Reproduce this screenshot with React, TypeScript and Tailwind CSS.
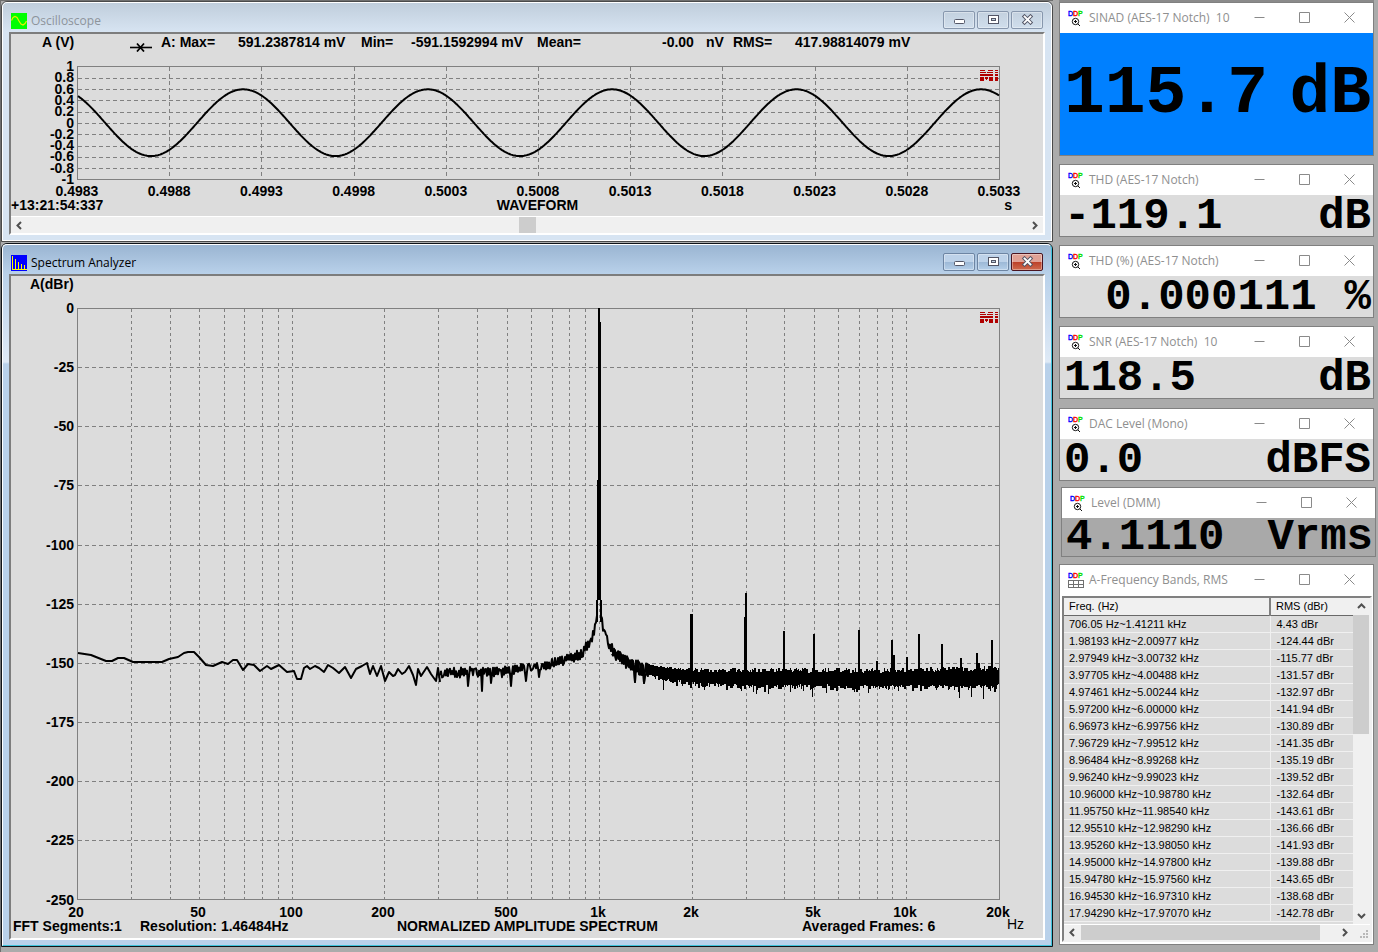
import React from 'react';

const GRID = '#808080';

function seeded(seed: number) {
  let s = seed;
  return () => {
    s = (s * 1664525 + 1013904223) % 4294967296;
    return s / 4294967296;
  };
}

/* ---------- drawings ---------- */

function MiLogo({ x, y }: { x: number; y: number }) {
  return (
    <g transform={`translate(${x} ${y})`} shapeRendering="crispEdges">
      <rect x="0" y="0" width="18" height="11" fill="#dcdcdc" />
      <g fill="#b00000">
        <rect x="0" y="0" width="5" height="1" />
        <rect x="8" y="0" width="5" height="1" />
        <rect x="15" y="0" width="3" height="1" />
        <rect x="0" y="2" width="6" height="1" />
        <rect x="7" y="2" width="6" height="1" />
        <rect x="15" y="2" width="3" height="1" />
        <rect x="0" y="4" width="13" height="2" />
        <rect x="15" y="4" width="3" height="2" />
        <rect x="0" y="7" width="4" height="4" />
        <rect x="5" y="7" width="3" height="2" />
        <rect x="6" y="9" width="1" height="1" />
        <rect x="9" y="7" width="4" height="4" />
        <rect x="15" y="7" width="3" height="4" />
      </g>
    </g>
  );
}

function sinePath() {
  let d = '';
  for (let x = 78; x <= 999; x += 1) {
    const y = 122.7 - 33.4 * Math.cos((2 * Math.PI * (x - 243.3)) / 184.4);
    d += `${x === 78 ? 'M' : 'L'}${x} ${y.toFixed(1)}`;
  }
  return d;
}

function WaveformChart() {
  const ys = ['1', '0.8', '0.6', '0.4', '0.2', '0', '-0.2', '-0.4', '-0.6', '-0.8', '-1'];
  const xs = ['0.4983', '0.4988', '0.4993', '0.4998', '0.5003', '0.5008', '0.5013', '0.5018', '0.5023', '0.5028', '0.5033'];
  return (
    <svg viewBox="11 58 1032 143" className="block h-auto w-full font-['Liberation_Sans',sans-serif] text-[14px] font-bold" role="img" aria-label="Waveform">
      <g stroke={GRID} strokeDasharray="4 3" shapeRendering="crispEdges">
        {ys.slice(1, -1).map((v, i) => (
          <line key={v} x1="78" x2="999" y1={Math.round(66.5 + 11.3 * (i + 1)) + 0.5} y2={Math.round(66.5 + 11.3 * (i + 1)) + 0.5} />
        ))}
        {xs.slice(1, -1).map((v, i) => (
          <line key={v} y1="67" y2="179" x1={Math.round(77 + 92.2 * (i + 1)) + 0.5} x2={Math.round(77 + 92.2 * (i + 1)) + 0.5} />
        ))}
      </g>
      <rect x="77.5" y="66.5" width="922" height="113" fill="none" stroke={GRID} shapeRendering="crispEdges" />
      <MiLogo x={980} y={70} />
      <path d={sinePath()} fill="none" stroke="#000" strokeWidth="2" />
      {ys.map((v, i) => (
        <text key={v} x="74" y={71 + 11.3 * i} textAnchor="end">{v}</text>
      ))}
      {xs.map((v, i) => (
        <text key={v} x={77 + 92.2 * i} y="196" textAnchor="middle">{v}</text>
      ))}
    </svg>
  );
}

const LOW_BAND: [number, number][] = [
  [78, 653], [91, 655], [101, 659], [106, 661], [112, 661], [118, 658], [124, 658], [133, 662], [140, 662], [162, 662],
  [169, 659], [178, 657], [184, 653], [188, 652], [194, 652], [199, 657], [206, 665], [213, 666], [222, 662], [228, 664],
  [233, 660], [237, 660], [243, 670], [248, 664], [254, 665], [260, 671], [267, 666], [271, 669], [279, 665], [287, 672],
  [294, 671], [297, 679], [301, 679], [304, 668], [307, 666], [310, 669], [315, 666], [319, 668], [324, 672], [328, 665],
  [333, 668], [339, 673], [345, 667], [351, 678], [356, 669], [362, 666], [367, 663], [370, 674], [373, 666], [377, 676],
  [381, 666], [385, 681], [389, 672], [393, 676], [395, 675], [398, 669], [402, 674], [405, 672], [409, 666], [413, 675],
  [416, 685], [418, 669], [421, 676], [427, 667], [431, 674], [436, 681], [438, 668], [440, 682],
];

/* centre, upward reach and downward reach of the trace along the log axis */
const FLOOR: [number, number, number, number][] = [
  [440, 673, 5, 5], [500, 672, 6, 6], [520, 669, 5, 5], [545, 665, 4, 5], [560, 661, 5, 5], [580, 654, 5, 6], [590, 643, 5, 6],
  [594, 632, 4, 5], [597, 614, 3, 5], [601, 614, 3, 4], [604, 633, 4, 5], [610, 646, 5, 6], [617, 656, 6, 6], [630, 663, 6, 8],
  [645, 669, 6, 8], [665, 674, 7, 8], [700, 677, 9, 10], [760, 678, 10, 11], [860, 679, 11, 10], [940, 679, 12, 10], [999, 678, 13, 10],
];

function floorAt(x: number) {
  let i = 0;
  while (i < FLOOR.length - 2 && x > FLOOR[i + 1][0]) i += 1;
  const a = FLOOR[i];
  const b = FLOOR[i + 1];
  const t = (x - a[0]) / (b[0] - a[0]);
  return [1, 2, 3].map((k) => a[k] + (b[k] - a[k]) * t);
}

const DIPS: Record<number, number> = {
  468: 686, 482: 691, 491: 683, 511: 686, 526: 681, 539: 677, 635: 682, 644: 683,
};

const DEEP: Record<number, number> = {
  663: 690, 704: 690, 756: 694, 768: 694, 812: 697, 959: 698, 971: 697, 983: 699,
};

function skirtPath(from: number, to: number, seed: number) {
  const rnd = seeded(seed);
  let d = '';
  let flip = 1;
  for (let x = from; x <= to; x += 1) {
    const [c, up, down] = floorAt(x);
    flip = rnd() > 0.25 ? -flip : flip;
    const reach = 0.25 + 0.75 * rnd();
    const y = DIPS[x] ?? c + (flip > 0 ? down * reach : -up * reach);
    d += `${x === from ? 'M' : 'L'}${x} ${y.toFixed(1)}`;
  }
  return d;
}

function bandPath() {
  const rnd = seeded(77);
  let d = '';
  let top = 0;
  let bottom = 0;
  for (let x = 646; x <= 998; x += 1) {
    const [c, up, down] = floorAt(x);
    if (x % 2 === 0 || rnd() > 0.6) {
      top = c - up * (0.55 + 0.45 * rnd());
      bottom = c + down * (0.55 + 0.45 * rnd()) + (rnd() > 0.85 ? 4 : 0);
    }
    d += `M${x + 0.5} ${top.toFixed(0)}V${DEEP[x] ?? bottom.toFixed(0)}`;
  }
  return d;
}

const HARMONICS: [number, number, number][] = [
  [691, 614, 3], [746, 593, 2], [745, 617, 3], [784, 631, 2], [814, 634, 2], [859, 630, 2], [877, 661, 2], [892, 640, 2], [893, 655, 3],
  [907, 657, 2], [919, 634, 2], [942, 644, 2], [961, 658, 2], [977, 653, 2], [978, 663, 3], [992, 640, 2],
];

function SpectrumChart() {
  const freqs: number[] = [];
  for (let dec = 10; dec <= 10000; dec *= 10) {
    for (let m = 1; m <= 9; m += 1) {
      const f = dec * m;
      if (f > 20 && f < 20000) freqs.push(f);
    }
  }
  const px = (f: number) => Math.round(77 + (922 * Math.log10(f / 20)) / 3);
  const levels = [0, -25, -50, -75, -100, -125, -150, -175, -200, -225, -250];
  const labels: [number, string][] = [
    [20, '20'], [50, '50'], [100, '100'], [200, '200'], [500, '500'], [1000, '1k'], [2000, '2k'], [5000, '5k'], [10000, '10k'], [20000, '20k'],
  ];
  return (
    <svg viewBox="11 276 1032 644" className="block h-auto w-full font-['Liberation_Sans',sans-serif] text-[14px] font-bold" role="img" aria-label="Normalized amplitude spectrum">
      <text x="30" y="289">A(dBr)</text>
      <g stroke={GRID} strokeDasharray="3 3" shapeRendering="crispEdges">
        {freqs.map((f) => (
          <line key={f} x1={px(f) + 0.5} x2={px(f) + 0.5} y1="309" y2="899" />
        ))}
        {levels.slice(1, -1).map((v, i) => (
          <line key={v} x1="78" x2="999" y1={Math.round(308 + 59.15 * (i + 1)) + 0.5} y2={Math.round(308 + 59.15 * (i + 1)) + 0.5} strokeDasharray="4 3" />
        ))}
      </g>
      <rect x="77.5" y="308.5" width="922" height="591" fill="none" stroke={GRID} shapeRendering="crispEdges" />
      <MiLogo x={980} y={312} />
      <g fill="none" stroke="#000" strokeWidth="2" strokeLinejoin="round">
        <path d={`M${LOW_BAND.map((p) => p.join(' ')).join('L')}`} />
        <path d={skirtPath(440, 597, 11)} />
        <path d={skirtPath(601, 648, 23)} />
        <path d={skirtPath(612, 648, 5)} />
      </g>
      <path d={bandPath()} stroke="#000" strokeWidth="1" shapeRendering="crispEdges" />
      <path d="M598 308H600V322H601V600H602V622H600V600H598V622H596V600H597V480H598Z" fill="#000" shapeRendering="crispEdges" />
      <g fill="#000" shapeRendering="crispEdges">
        {HARMONICS.map(([x, y, w]) => (
          <rect key={x} x={x - 1} y={y} width={w} height={676 - y} />
        ))}
      </g>
      {levels.map((v, i) => (
        <text key={v} x="74" y={313 + 59.15 * i} textAnchor="end">{v}</text>
      ))}
      {labels.map(([f, t]) => (
        <text key={t} x={px(f) - 1} y="917" textAnchor="middle">{t}</text>
      ))}
    </svg>
  );
}

function ScopeIcon() {
  return (
    <svg width="16" height="16" viewBox="0 0 16 16" aria-hidden="true">
      <rect width="16" height="16" fill="#00ff00" />
      <path d="M0.5 7.5L2 4.5L4 3.5L6 4.5L8 8L10 11L12 12L14 10.500L15.500 8" fill="none" stroke="#e8f000" strokeWidth="1.200" />
    </svg>
  );
}

function AnalyzerIcon() {
  return (
    <svg width="16" height="16" viewBox="0 0 16 16" shapeRendering="crispEdges" aria-hidden="true">
      <rect width="16" height="16" fill="#0000ff" />
      <path d="M1.500 1V15M4.500 4V15M7.500 7V15M10.500 9V15M13.500 10V15M1 14.500H16" stroke="#ffff00" fill="none" />
    </svg>
  );
}

function DdpIcon({ table = false }: { table?: boolean }) {
  return (
    <svg width="16" height="17" viewBox="0 0 16 17" className="shrink-0" aria-hidden="true">
      <g className="font-['Liberation_Sans',sans-serif] text-[7px]" strokeWidth="0.400">
        <text x="0" y="6" fill="#0000ff" stroke="#0000ff">D</text>
        <text x="5" y="6" fill="#ff0000" stroke="#ff0000">D</text>
        <text x="10" y="6" fill="#00e000" stroke="#00e000">P</text>
      </g>
      {table ? (
        <path d="M0.500 8.500H15.500V15.500H0.500ZM0.500 12H15.500M5.500 8.500V15.500M10.500 8.500V15.500" fill="none" stroke="#707070" shapeRendering="crispEdges" />
      ) : (
        <g fill="none" stroke="#111">
          <circle cx="7.500" cy="11.500" r="3.200" />
          <path d="M9.800 13.800L12 16M7.500 10V13M6 11.500H9" />
        </g>
      )}
    </svg>
  );
}

/* ---------- windows ---------- */

function CaptionButton({ kind, active }: { kind: 'Minimize' | 'Maximize' | 'Close'; active: boolean }) {
  const red = active && kind === 'Close';
  const skin = red
    ? 'border-[#4a1420] bg-linear-to-b from-[#e0a195] from-50% via-[#bb3f28] via-50% to-[#cf6a4e]'
    : active
      ? 'border-[#6d85a3] bg-linear-to-b from-[#bdd2e9] from-50% via-[#9cb8d6] via-50% to-[#b5cfe9]'
      : 'border-[#8797ad] bg-linear-to-b from-[#c3d1df] to-[#d0deec]';
  return (
    <button type="button" aria-label={kind} className={`flex h-[18px] w-8 items-center justify-center rounded-[2px] border shadow-[inset_0_0_0_1px_rgba(255,255,255,0.35)] ${skin}`}>
      <svg width="13" height="11" viewBox="0 0 13 11" aria-hidden="true">
        {kind === 'Minimize' && <rect x="1.500" y="5.500" width="10" height="4" rx="1" fill="#fff" stroke="#535666" />}
        {kind === 'Maximize' && (
          <g stroke="#535666" fill="#fff">
            <rect x="1.500" y="1.500" width="10" height="8" />
            <rect x="4.500" y="4.500" width="4" height="2" fill="#c0d0e0" />
          </g>
        )}
        {kind === 'Close' && (
          <g strokeLinecap="square">
            <path d="M3.500 2.500L9.500 8.500M9.500 2.500L3.500 8.500" stroke="#535666" strokeWidth="3.800" />
            <path d="M3.500 2.500L9.500 8.500M9.500 2.500L3.500 8.500" stroke="#fff" strokeWidth="1.800" />
          </g>
        )}
      </svg>
    </button>
  );
}

function AeroWindow({ title, icon, active = false, children }: { title: string; icon: React.ReactNode; active?: boolean; children: React.ReactNode }) {
  const frame = active
    ? 'border-[#101418] bg-[linear-gradient(#99b4d1_0px,#b9d1ea_30px,#dfeaf6_118px,#b9d1ea_120px)]'
    : 'border-[#4a4a4a] bg-[linear-gradient(#bfcddb_0px,#d7e4f2_30px,#d7e4f2_100%)]';
  return (
    <section aria-label={title} className={`rounded-t-md border ${frame}`}>
      <div className={`rounded-t-[5px] border px-1.5 pb-[5px] ${active ? 'border-t-white border-r-[#3fc4dc] border-b-[#3fc4dc] border-l-white' : 'border-white'}`}>
        <header className="flex h-[29px] items-center justify-between pr-0.5 pl-0.5">
          <h2 className="flex items-center gap-1 pt-1.5">
            {icon}
            <span className={`font-['Open_Sans','Noto_Sans',sans-serif] text-[12px] leading-4 ${active ? 'text-black' : 'text-[#8d949b]'}`}>{title}</span>
          </h2>
          <div className="flex gap-0.5 pt-1">
            <CaptionButton kind="Minimize" active={active} />
            <CaptionButton kind="Maximize" active={active} />
            <CaptionButton kind="Close" active={active} />
          </div>
        </header>
        <div className="border-2 border-t-[#7d7d7d] border-r-white border-b-white border-l-[#7d7d7d] bg-[#dcdcdc]">{children}</div>
      </div>
    </section>
  );
}

function ArrowButton({ label, d, className }: { label: string; d: string; className: string }) {
  return (
    <button type="button" aria-label={label} className={`flex items-center justify-center bg-[#f0f0f0] ${className}`}>
      <svg width="9" height="9" viewBox="0 0 9 9" aria-hidden="true">
        <path d={d} fill="none" stroke="#505050" strokeWidth="2" />
      </svg>
    </button>
  );
}

const LEFT = 'M6 1L2.500 4.500L6 8';
const RIGHT = 'M3 1L6.500 4.500L3 8';
const UP = 'M1 6L4.500 2.500L8 6';
const DOWN = 'M1 3L4.500 6.500L8 3';

function ToolTitle({ title, table }: { title: string; table?: boolean }) {
  const button = 'flex h-full w-[45px] items-center justify-center';
  return (
    <header className="flex h-[30px] items-center bg-white pr-px pl-2">
      <DdpIcon table={table} />
      <h2 className="flex-1 pl-[5px] font-['Open_Sans','Noto_Sans',sans-serif] text-[12px] leading-4 whitespace-pre text-[#8f8f8f]">{title}</h2>
      <div className="flex h-full pb-0.5 text-[#8a8a8a]">
        <button type="button" aria-label="Minimize" className={button}>
          <svg width="11" height="11" viewBox="0 0 11 11" aria-hidden="true"><path d="M0.500 5.500H10.500" stroke="currentColor" /></svg>
        </button>
        <button type="button" aria-label="Maximize" className={button}>
          <svg width="11" height="11" viewBox="0 0 11 11" aria-hidden="true"><path d="M0.500 0.500H10.500V10.500H0.500Z" fill="none" stroke="currentColor" /></svg>
        </button>
        <button type="button" aria-label="Close" className={button}>
          <svg width="11" height="11" viewBox="0 0 11 11" aria-hidden="true"><path d="M0.500 0.500L10.500 10.500M10.500 0.500L0.500 10.500" stroke="currentColor" /></svg>
        </button>
      </div>
    </header>
  );
}

function Meter({ title, value, unit, className, body }: { title: string; value: string; unit: string; className?: string; body: string }) {
  return (
    <section aria-label={title} className={`border border-[#808080] ${className ?? ''}`}>
      <ToolTitle title={title} />
      <p className={`flex items-center pr-0.5 pl-1 font-['Liberation_Mono',monospace] font-bold text-black ${body}`}>
        <span>{value}</span> <span>{unit}</span>
      </p>
    </section>
  );
}

const SMALL = 'h-[41px] justify-between bg-[#dcdcdc] text-[44px] leading-10';

const BANDS: [string, string][] = [
  ['706.05 Hz~1.41211 kHz', '4.43 dBr'],
  ['1.98193 kHz~2.00977 kHz', '-124.44 dBr'],
  ['2.97949 kHz~3.00732 kHz', '-115.77 dBr'],
  ['3.97705 kHz~4.00488 kHz', '-131.57 dBr'],
  ['4.97461 kHz~5.00244 kHz', '-132.97 dBr'],
  ['5.97200 kHz~6.00000 kHz', '-141.94 dBr'],
  ['6.96973 kHz~6.99756 kHz', '-130.89 dBr'],
  ['7.96729 kHz~7.99512 kHz', '-141.35 dBr'],
  ['8.96484 kHz~8.99268 kHz', '-135.19 dBr'],
  ['9.96240 kHz~9.99023 kHz', '-139.52 dBr'],
  ['10.96000 kHz~10.98780 kHz', '-132.64 dBr'],
  ['11.95750 kHz~11.98540 kHz', '-143.61 dBr'],
  ['12.95510 kHz~12.98290 kHz', '-136.66 dBr'],
  ['13.95260 kHz~13.98050 kHz', '-141.93 dBr'],
  ['14.95000 kHz~14.97800 kHz', '-139.88 dBr'],
  ['15.94780 kHz~15.97560 kHz', '-143.65 dBr'],
  ['16.94530 kHz~16.97310 kHz', '-138.68 dBr'],
  ['17.94290 kHz~17.97070 kHz', '-142.78 dBr'],
];

function BandsWindow() {
  return (
    <section aria-label="A-Frequency Bands, RMS" className="mt-[7px] border border-[#808080] bg-white">
      <ToolTitle title="A-Frequency Bands, RMS" table />
      <div className="mt-px mr-px mb-0.5 ml-0.5 border-2 border-t-[#808080] border-r-[#f0f0f0] border-b-[#f0f0f0] border-l-[#808080] bg-[#f0f0f0]">
        <div className="flex">
          <div className="flex-1 bg-[#dcdcdc] pb-0.5">
            <table className="w-full table-fixed border-collapse text-left font-['Liberation_Sans',sans-serif] text-[11px] leading-4 text-black">
              <thead>
                <tr className="h-[17px] border-b border-[#696969] bg-[#f0f0f0]">
                  <th scope="col" className="border-r-2 border-[#808080] p-0 pl-[5px] font-normal">Freq. (Hz)</th>
                  <th scope="col" className="w-[83px] p-0 pl-[5px] font-normal">RMS (dBr)</th>
                </tr>
              </thead>
              <tbody>
                {BANDS.map(([band, rms]) => (
                  <tr key={band} className="h-[17px] border-b border-[#f0f0f0]">
                    <td className="border-r border-[#f0f0f0] p-0 pl-[5px]">{band}</td>
                    <td className="p-0 pl-[6px]">{rms}</td>
                  </tr>
                ))}
              </tbody>
            </table>
          </div>
          <div className="flex w-[17px] flex-col bg-[#f0f0f0]">
            <ArrowButton label="Scroll up" d={UP} className="h-[17px] w-full" />
            <div className="h-[119px] w-4 bg-[#cdcdcd]" />
            <div className="flex-1" />
            <ArrowButton label="Scroll down" d={DOWN} className="h-[17px] w-full" />
          </div>
        </div>
        <div className="flex h-4 border-t border-white">
          <ArrowButton label="Scroll left" d={LEFT} className="w-[17px]" />
          <div className="w-[239px] bg-[#cdcdcd]" />
          <div className="flex-1" />
          <ArrowButton label="Scroll right" d={RIGHT} className="w-[17px]" />
          <div className="flex w-[17px] items-end justify-end">
            <svg width="10" height="10" viewBox="0 0 10 10" fill="#b8b8b8" shapeRendering="crispEdges" aria-hidden="true">
              <path d="M6 0H8V2H6ZM3 3H5V5H3ZM6 3H8V5H6ZM0 6H2V8H0ZM3 6H5V8H3ZM6 6H8V8H6Z" />
            </svg>
          </div>
        </div>
      </div>
    </section>
  );
}

export default function App() {
  return (
    <main className="flex min-h-screen items-start gap-1.5 border-l border-[#6f6f6f] bg-[#ababab] pr-1 text-black">
      <div className="flex min-w-0 flex-1 flex-col gap-px border-t border-[#6f6f6f]">
        <AeroWindow title="Oscilloscope" icon={<ScopeIcon />}>
          <div className="grid h-6 grid-cols-[88px_31px_77px_123px_50px_126px_125px_44px_27px_62px_auto] pl-[31px] font-['Liberation_Sans',sans-serif] text-[14px] leading-[17px] font-bold whitespace-nowrap">
            <span>A (V)</span>
            <svg width="22" height="10" viewBox="0 0 22 10" className="mt-2" aria-hidden="true">
              <path d="M0 5.500H22" stroke="#000" strokeWidth="1.600" />
              <path d="M7 1.500L14 9.500M14 1.500L7 9.500" stroke="#000" strokeWidth="1.800" />
            </svg>
            <span>A: Max=</span>
            <span>591.2387814 mV</span>
            <span>Min=</span>
            <span>-591.1592994 mV</span>
            <span>Mean=</span>
            <span>-0.00</span>
            <span>nV</span>
            <span>RMS=</span>
            <span>417.98814079 mV</span>
          </div>
          <WaveformChart />
          <div className="grid h-[15px] grid-cols-[1fr_auto_1fr] pr-[31px] font-['Liberation_Sans',sans-serif] text-[14px] leading-2 font-bold">
            <span>+13:21:54:337</span>
            <span className="pl-13">WAVEFORM</span>
            <span className="text-right">s</span>
          </div>
          <div className="flex h-[17px] border-t border-white bg-[#f0f0f0]">
            <ArrowButton label="Scroll left" d={LEFT} className="w-[17px]" />
            <div className="flex flex-1 justify-center">
              <div className="w-[17px] bg-[#cdcdcd]" />
            </div>
            <ArrowButton label="Scroll right" d={RIGHT} className="w-[17px]" />
          </div>
        </AeroWindow>
        <AeroWindow title="Spectrum Analyzer" icon={<AnalyzerIcon />} active>
          <SpectrumChart />
          <div className="grid h-[18px] grid-cols-[127px_257px_405px_205px_auto] pl-0.5 font-['Liberation_Sans',sans-serif] text-[14px] leading-3 font-bold whitespace-nowrap">
            <span>FFT Segments:1</span>
            <span>Resolution: 1.46484Hz</span>
            <span>NORMALIZED AMPLITUDE SPECTRUM</span>
            <span>Averaged Frames: 6</span>
            <span className="leading-2 font-normal">Hz</span>
          </div>
        </AeroWindow>
      </div>

      <aside className="w-[315px] shrink-0 border-t-2 border-[#8a8a8a]">
        <Meter title="SINAD (AES-17 Notch)  10" value="115.7" unit="dB" body="h-[122px] justify-between bg-[#0080ff] text-[68px] leading-none" />
        <Meter title="THD (AES-17 Notch)" value="-119.1" unit="dB" className="mt-2" body={SMALL} />
        <Meter title="THD (%) (AES-17 Notch)" value="0.000111" unit="%" className="mt-2" body="h-[41px] justify-end gap-7 bg-[#dcdcdc] text-[44px] leading-10" />
        <Meter title="SNR (AES-17 Notch)  10" value="118.5" unit="dB" className="mt-2" body={SMALL} />
        <Meter title="DAC Level (Mono)" value="0.0" unit="dBFS" className="mt-[9px]" body={SMALL} />
        <Meter title="Level (DMM)" value="4.1110" unit="Vrms" className="mt-1.5 -mr-0.5 ml-0.5" body="h-[38px] justify-between bg-[#a9a9a9] text-[44px] leading-9" />
        <BandsWindow />
      </aside>
    </main>
  );
}
